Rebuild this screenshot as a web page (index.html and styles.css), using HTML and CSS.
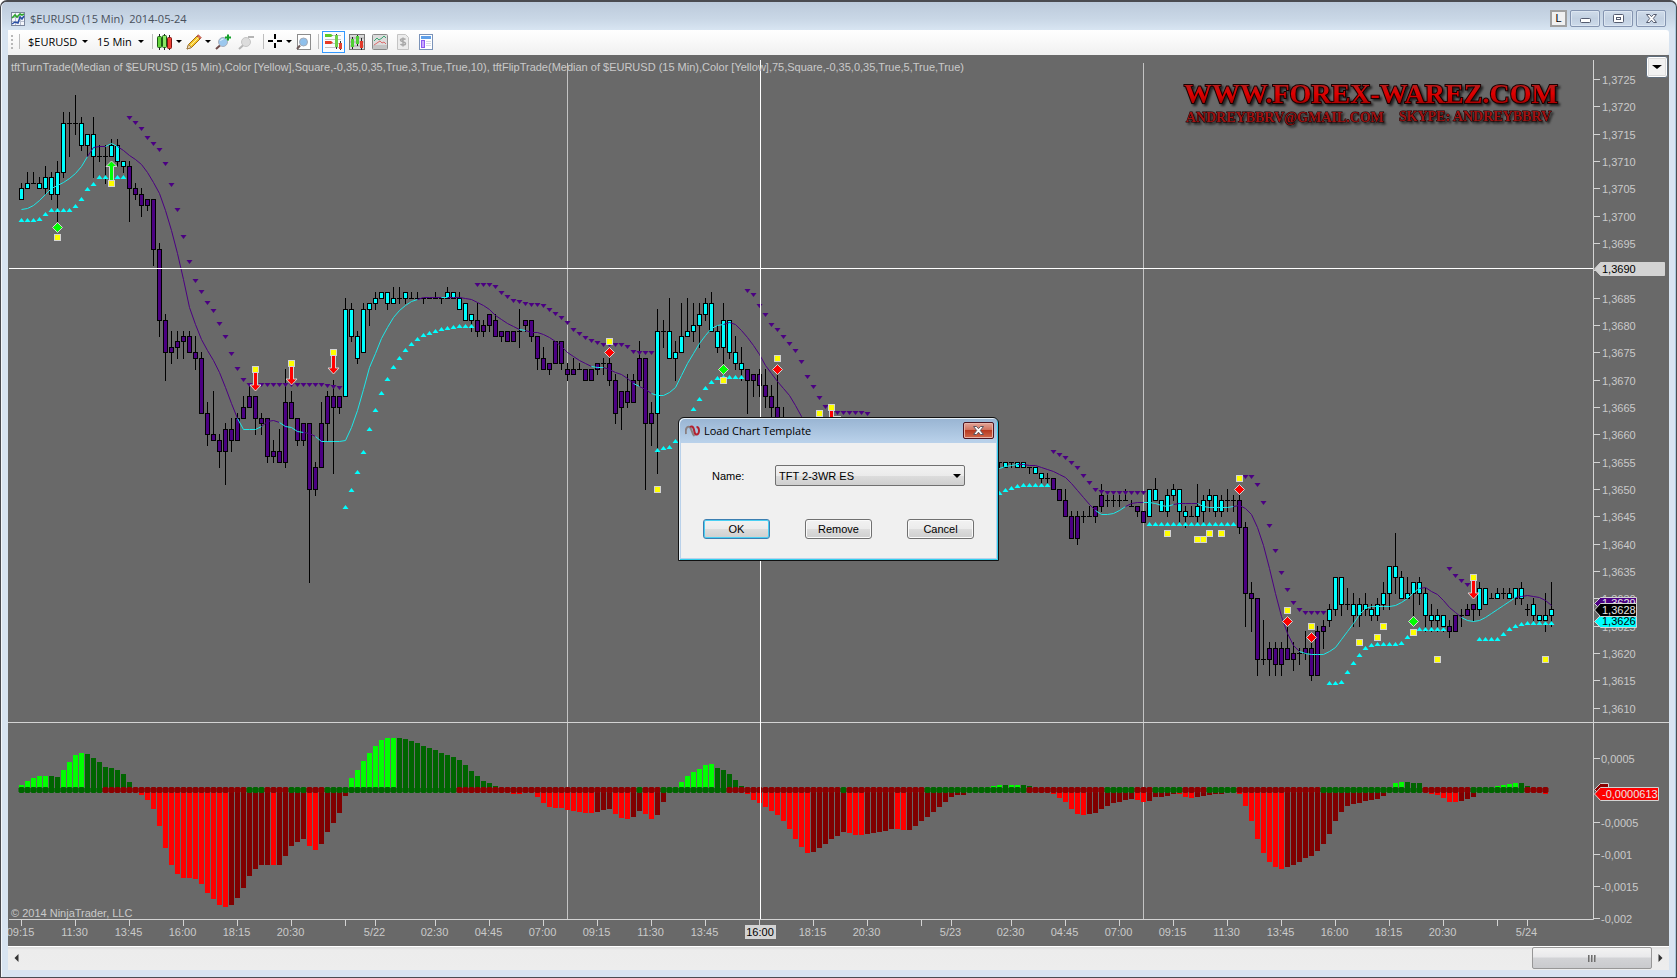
FILE: index.html
```html
<!DOCTYPE html>
<html lang="en">
<head>
<meta charset="utf-8">
<title>$EURUSD (15 Min) 2014-05-24</title>
<link rel="stylesheet" href="styles.css">
</head>
<body>
<div class="window">
  <header class="titlebar">
    <svg class="app-icon" viewBox="0 0 14 14" aria-hidden="true">
      <rect x=".5" y=".5" width="13" height="13" fill="#f4f6fb" stroke="#7b869c"/>
      <path d="M1 5.5h12M1 9.5h12M4.5 1v12M9.5 1v12" stroke="#b9c0d0"/>
      <path d="M1 6l3-3 2 2 3-3 2 1 2-1" fill="none" stroke="#2da52d" stroke-width="1.6"/>
      <path d="M1 12l3-2 3 1 2-6 2 2 2-3" fill="none" stroke="#2a4fa5" stroke-width="1.5"/>
    </svg>
    <h1 class="title">$EURUSD (15 Min)&nbsp; 2014-05-24</h1>
    <div class="window-buttons">
      <button class="link-button" type="button">L</button>
      <button class="win-button" type="button" aria-label="Minimize"><svg width="13" height="11" viewBox="0 0 13 11"><rect x="1.500" y="5.500" width="10" height="4" rx="1" fill="#fff" stroke="#555c70"/></svg></button>
      <button class="win-button" type="button" aria-label="Maximize"><svg width="13" height="11" viewBox="0 0 13 11"><rect x="1.500" y="1.500" width="10" height="8" rx="1" fill="#fff" stroke="#555c70"/><rect x="4.500" y="4.500" width="4" height="2" fill="#fff" stroke="#555c70"/></svg></button>
      <button class="win-button" type="button" aria-label="Close"><svg width="13" height="11" viewBox="0 0 13 11"><path d="M1.500 1.500h3l2 2.200 2-2.200h3L8.300 5.500l3.200 4h-3l-2-2.300-2 2.300h-3l3.200-4z" fill="#fff" stroke="#555c70"/></svg></button>
    </div>
  </header>
  <nav class="toolbar" aria-label="Chart tools">
    <span class="grip"></span>
    <span class="divider"></span>
    <button class="tool tool-symbol" type="button">$EURUSD<span class="caret"></span></button>
    <button class="tool tool-period" type="button">15 Min<span class="caret"></span></button>
    <span class="divider"></span>
    <button class="tool" type="button" aria-label="Chart style">
      <svg width="16" height="16" viewBox="0 0 16 16"><path d="M2.500 0v16M7.500 0v16M12.500 1v15" stroke="#222"/><rect x=".5" y="2.500" width="4" height="11" rx="1" fill="#63d33a" stroke="#1c5c14"/><rect x="5.500" y="1.500" width="4" height="12" rx="1" fill="#8be864" stroke="#1c5c14"/><rect x="10.500" y="3.500" width="4" height="11" rx="1" fill="#ef4136" stroke="#7e1512"/></svg><span class="caret"></span>
    </button>
    <button class="tool" type="button" aria-label="Drawing tools">
      <svg width="16" height="16" viewBox="0 0 16 16"><path d="M1 15l1.500-4.500L11 2l3 3-8.500 8.500z" fill="#f5c92c" stroke="#a36a14"/><path d="M2.500 10.500l3 3L1 15z" fill="#f3dcb6" stroke="#8b6a3a" stroke-width=".7"/><path d="M11 2l1.300-1.300 3 3L14 5z" fill="#e06a55" stroke="#a3483a" stroke-width=".7"/><path d="M4.500 11.500l8-8" stroke="#fff0a0"/></svg><span class="caret"></span>
    </button>
    <button class="tool tool-zoom" type="button" aria-label="Zoom in">
      <svg width="18" height="16" viewBox="0 0 18 16"><path d="M1 15l4.500-4" stroke="#6e4a4a" stroke-width="2"/><circle cx="8" cy="8" r="4.500" fill="#9cc8ee" stroke="#a9b0bd"/><path d="M5.500 7a3 3 0 0 1 3-2" stroke="#eef7ff" fill="none"/><path d="M13 .5v6M10 3.500h6" stroke="#12a02a" stroke-width="2"/></svg>
    </button>
    <button class="tool tool-zoom" type="button" aria-label="Zoom out" disabled>
      <svg width="18" height="16" viewBox="0 0 18 16"><path d="M1 15l4.500-4" stroke="#b5b5b5" stroke-width="2"/><circle cx="8" cy="8" r="4.500" fill="#dcdcdc" stroke="#c6c6c6"/><path d="M10 3h6" stroke="#b5b5b5" stroke-width="2"/></svg>
    </button>
    <span class="divider"></span>
    <button class="tool" type="button" aria-label="Crosshair">
      <svg width="15" height="15" viewBox="0 0 15 15"><path d="M7 0v5M7 9v5M0 7h5M9 7h5" stroke="#000" stroke-width="2"/></svg><span class="caret"></span>
    </button>
    <button class="tool" type="button" aria-label="Data box">
      <svg width="16" height="16" viewBox="0 0 16 16"><rect x="1.500" y=".5" width="13" height="15" fill="#fff" stroke="#8c8c8c"/><path d="M1 15l3-3.500" stroke="#6e5a5a" stroke-width="2"/><circle cx="7.500" cy="8" r="4" fill="#8fc0ec" stroke="#a3abb8"/></svg>
    </button>
    <span class="divider"></span>
    <button class="tool tool-active" type="button" aria-label="Chart trader" aria-pressed="true">
      <svg width="17" height="17" viewBox="0 0 17 17"><path d="M0 2.500h16M0 6.500h16M0 10.500h16M0 14.500h16" stroke="#c4c4c4"/><path d="M0 1h6l2 1.500L6 4H0z" fill="#5cc926"/><path d="M0 8h6l2 1.500L6 11H0z" fill="#e63a26"/><path d="M11.500 1v15M15.500 8v9" stroke="#333"/><rect x="10" y="2" width="3" height="12" fill="#6ed14a"/><rect x="14" y="10" width="3" height="6" fill="#e2402f"/></svg>
    </button>
    <button class="tool tool-panel" type="button" aria-label="Chart bars">
      <svg width="16" height="16" viewBox="0 0 16 16"><rect x=".5" y=".5" width="15" height="15" fill="#d8d8d8" stroke="#777"/><path d="M1 4h14M1 8h14M1 12h14" stroke="#aaa"/><path d="M3.500 3v12M8.500 1v11M12.500 4v12" stroke="#222"/><rect x="2" y="5" width="3" height="8" fill="#50cf35"/><rect x="7" y="2" width="3" height="8" fill="#50cf35"/><rect x="11" y="7" width="3" height="7" fill="#e3392a"/></svg>
    </button>
    <button class="tool tool-panel" type="button" aria-label="Indicators">
      <svg width="16" height="16" viewBox="0 0 16 16"><rect x=".5" y=".5" width="15" height="15" rx="1" fill="#dcdcdc" stroke="#8a8a8a"/><rect x="1" y="11" width="14" height="4" fill="#c3c3c3"/><path d="M2 7l3-3 2 2 3-2 2-2 2 2" fill="none" stroke="#3ba673"/><path d="M2 11l3-2 3-2 2 2 2-1 2 2" fill="none" stroke="#dd6b6b"/></svg>
    </button>
    <button class="tool tool-panel" type="button" aria-label="Strategies" disabled>
      <svg width="16" height="16" viewBox="0 0 16 16"><path d="M2.500.5h8l3 3v12h-11z" fill="#ececec" stroke="#c4c4c4"/><path d="M10.500 5.500c-1-1.200-5-1.300-5 .6 0 2.200 5 1.200 5 3.500 0 2-4 1.900-5 .4M8 3.500v9" fill="none" stroke="#a8a8a8" stroke-width="1.500"/></svg>
    </button>
    <button class="tool tool-panel" type="button" aria-label="Properties">
      <svg width="16" height="16" viewBox="0 0 16 16"><rect x="1.500" y=".5" width="13" height="15" fill="#fff" stroke="#7b93b8"/><rect x="3" y="2" width="10" height="3" fill="#5f9fe8"/><rect x="3.500" y="6.500" width="3" height="7" fill="#c9a8ff" stroke="#8b5cf0"/><path d="M8 7.500h5M8 9.500h5M8 11.500h5" stroke="#d6dbe4"/></svg>
    </button>
  </nav>
  <main class="chart">
    <svg class="plot" id="plot" viewBox="8 55 1661 891" role="img" aria-label="$EURUSD 15 minute chart"></svg>
    <button class="panel-toggle" type="button" aria-label="Panel menu"><span class="caret caret-large"></span></button>
  </main>
  <div class="scrollbar">
    <button class="scroll-arrow" type="button" aria-label="Scroll left"><svg width="5" height="8" viewBox="0 0 5 8"><path d="M4.500 0v8L.5 4z" fill="#333"/></svg></button>
    <div class="scroll-track"><div class="scroll-thumb"><i></i><i></i><i></i></div></div>
    <button class="scroll-arrow" type="button" aria-label="Scroll right"><svg width="5" height="8" viewBox="0 0 5 8"><path d="M.5 0v8l4-4z" fill="#333"/></svg></button>
  </div>
</div>
<div class="dialog-layer">
  <section class="dialog" role="dialog" aria-labelledby="dialog-title">
    <header class="dialog-header">
      <svg width="15" height="12" viewBox="0 0 15 12" aria-hidden="true"><path d="M1 9C0 4 2 1 4.500 2s2 7 5 9" fill="none" stroke="#8a7f80" stroke-width="2"/><path d="M5 2c3-2 4 2 4.500 5s4 4 4.500-1c0-2-1-4-2.500-4" fill="none" stroke="#b3202e" stroke-width="2"/></svg>
      <h2 class="dialog-title" id="dialog-title">Load Chart Template</h2>
      <button class="dialog-close" type="button" aria-label="Close"><svg width="13" height="11" viewBox="0 0 13 11"><path d="M1.500 1.500h3l2 2.200 2-2.200h3L8.300 5.500l3.200 4h-3l-2-2.300-2 2.300h-3l3.200-4z" fill="#fff" stroke="#5c5560"/></svg></button>
    </header>
    <form class="dialog-body">
      <div class="field">
        <label class="field-label" for="template">Name:</label>
        <span class="select-wrap"><select class="select" id="template"><option>TFT 2-3WR ES</option></select><span class="caret caret-select"></span></span>
      </div>
      <div class="actions">
        <button class="button button-default" type="button">OK</button>
        <button class="button" type="button">Remove</button>
        <button class="button" type="button">Cancel</button>
      </div>
    </form>
  </section>
</div>
<script src="chart.js"></script>
</body>
</html>
```
FILE: styles.css
```css
* { box-sizing: border-box; }
html, body { height: 100%; }
body {
  margin: 0;
  background: #fff;
  font: 11px/14px "Liberation Sans", Arial, sans-serif;
  color: #000;
}
button { font: inherit; color: inherit; margin: 0; padding: 0; }
svg { display: block; }

.window {
  height: 100vh;
  display: flex;
  flex-direction: column;
  padding: 0 7px 7px;
  border: 1px solid #4a4b50;
  border-top-width: 2px;
  border-radius: 7px 7px 0 0;
  background: #d8e4f1;
  box-shadow: inset 1px 0 0 #f3f7fb, inset -1px 0 0 #a9c9dd;
}
.titlebar {
  height: 28px;
  flex: none;
  margin: 0 -6px;
  padding: 5px 9px 0;
  display: flex;
  align-items: center;
  gap: 5px;
  border-radius: 5px 5px 0 0;
  background: linear-gradient(#bccadb, #c9d7e6 60%, #d8e5f2);
}
.app-icon { width: 14px; height: 14px; }
.title {
  flex: 1;
  margin: 0;
  font: 11px/16px "Open Sans", "Noto Sans", sans-serif;
  color: #48505c;
}
.window-buttons { display: flex; align-items: center; gap: 3px; }
.link-button {
  width: 17px;
  height: 17px;
  border: 2px solid #a0a0a0;
  background: #f0f0f0;
  line-height: 13px;
}
.win-button {
  width: 30px;
  height: 17px;
  display: grid;
  place-items: center;
  border: 1px solid #8494b0;
  border-radius: 2px;
  background: linear-gradient(#d0dcea, #c2d0e1 50%, #cddaea);
  box-shadow: inset 0 0 0 1px #dce6f1;
}

.toolbar {
  height: 25px;
  flex: none;
  display: flex;
  align-items: center;
  gap: 4px;
  padding: 0 3px 2px;
  border-radius: 0 3px 3px 0;
  background: linear-gradient(#fff, #f8f8f8 50%, #f0f0f0);
  font: 11px/16px "Open Sans", "Noto Sans", sans-serif;
}
.grip {
  width: 2px;
  height: 14px;
  background: repeating-linear-gradient(#b8b8b8 0 2px, transparent 2px 4px);
}
.divider { width: 1px; height: 15px; margin-left: 2px; background: #bdbdbd; }
.tool {
  display: flex;
  align-items: center;
  gap: 3px;
  border: 0;
  background: none;
  white-space: nowrap;
}
.tool-symbol { width: 65px; justify-content: space-between; padding: 0 1px 0 4px; }
.tool-period { width: 53px; justify-content: space-between; padding: 0 2px 0 4px; }
.tool-zoom { width: 19px; }
.tool-active {
  width: 23px;
  height: 22px;
  margin-left: -1px;
  justify-content: center;
  border: 1px solid #3399ff;
  background: #fafcff;
}
.tool-panel { width: 19px; }
.caret {
  width: 0;
  height: 0;
  border: 3px solid transparent;
  border-top-color: #000;
  border-bottom: 0;
}
.caret-large { border-width: 4px 5px 0; }
.caret-select { border-width: 4px 4px 0; }

.chart {
  position: relative;
  flex: 1;
  min-height: 0;
  overflow: hidden;
  background: #696969;
}
.plot { width: 100%; height: 100%; }
.plot text { font: 11px "Liberation Sans", Arial, sans-serif; fill: #cacaca; }
.plot .centered { text-anchor: middle; }
.plot .dark { fill: #000; }
.plot .light { fill: #e6e6e6; }
.plot .brand {
  font: bold 28px "Liberation Serif", "Times New Roman", serif;
  fill: url(#brand-fill);
  stroke: #1c0000;
  stroke-width: 2px;
  paint-order: stroke;
  filter: drop-shadow(2px 2px 1px #222);
}
.plot .brand-small { font-size: 14px; stroke-width: 1px; fill: #a01212; }
.axis { stroke: #d3d3d3; fill: none; }
.session { stroke: #c3c3c3; }
.cursor { stroke: #fff; }
.wick { stroke: #000; }
.body-up { fill: #00ffff; stroke: #000; }
.body-down { fill: #4b0082; stroke: #000; }
.average { fill: none; }
.average-up { stroke: #1ce8e8; }
.average-down { stroke: #4b0082; }
.trail-up { fill: #00ffff; }
.trail-down { fill: #4b0082; }
.square { fill: #ffff00; stroke: #d3d3d3; }
.signal { stroke: #d3d3d3; }
.panel-toggle {
  position: absolute;
  top: 1px;
  right: 1px;
  width: 22px;
  height: 22px;
  display: grid;
  place-items: center;
  border: 1px solid #5f6d7c;
  border-radius: 3px;
  background: #f2f2f2;
  box-shadow: inset 0 0 0 1px #fff, inset 0 0 0 2px #dcdcdc;
}

.scrollbar {
  height: 24px;
  flex: none;
  display: flex;
  padding-bottom: 1px;
  border-top: 1px solid #fff;
  background: linear-gradient(#dedede, #ececec 3px, #ededed);
}
.scroll-arrow {
  width: 17px;
  display: grid;
  place-items: center;
  border: 0;
  background: none;
}
.scroll-track { flex: 1; display: flex; justify-content: flex-end; }
.scroll-thumb {
  width: 120px;
  display: flex;
  align-items: center;
  justify-content: center;
  gap: 1px;
  border: 1px solid #979797;
  border-radius: 2px;
  background: linear-gradient(#f3f3f3, #e9e9eb 45%, #d2d3d6 50%, #c9cacd);
}
.scroll-thumb i { width: 2px; height: 7px; background: linear-gradient(90deg, #555, #bbb); }

.dialog-layer {
  position: absolute;
  inset: 0;
  display: grid;
  place-items: center;
}
.dialog {
  width: 321px;
  padding: 0 2px 2px;
  border: 1px solid #111;
  border-radius: 6px 6px 0 0;
  background: linear-gradient(#98b4d2, #b9d1ea 24px, #b9d1ea);
  box-shadow: inset 1px 1px 0 #e6f0f8, inset -1px -1px 0 #33cfee;
}
.dialog-header {
  height: 25px;
  display: flex;
  align-items: center;
  gap: 4px;
  padding: 0 2px 0 4px;
}
.dialog-title {
  flex: 1;
  margin: 0;
  font: 11px/16px "Open Sans", "Noto Sans", sans-serif;
}
.dialog-close {
  width: 31px;
  height: 17px;
  display: grid;
  place-items: center;
  border: 1px solid #4d1420;
  border-radius: 2px;
  background: linear-gradient(#e3a599, #d0705c 48%, #b83a20 50%, #d0694c);
  box-shadow: inset 0 0 0 1px #e8b3a8;
}
.dialog-body {
  display: flex;
  flex-direction: column;
  gap: 33px;
  padding: 22px 22px 19px;
  background: #f0f0f0;
}
.field { display: flex; align-items: center; justify-content: space-between; padding: 0 9px; }
.select-wrap { position: relative; width: 190px; height: 21px; }
.select {
  width: 100%;
  height: 100%;
  appearance: none;
  padding: 0 3px;
  border: 1px solid #707070;
  border-radius: 2px;
  background: linear-gradient(#f2f2f2, #ebebeb 50%, #dddddd 51%, #cfcfcf);
  font: inherit;
  color: #000;
}
.caret-select { position: absolute; right: 4px; top: 9px; pointer-events: none; }
.actions { display: flex; justify-content: space-between; }
.button {
  width: 67px;
  height: 20px;
  border: 1px solid #707070;
  border-radius: 3px;
  background: linear-gradient(#f2f2f2, #ebebeb 50%, #dddddd 51%, #cfcfcf);
  box-shadow: inset 0 0 0 1px #fafafa;
}
.button-default { border-color: #3c7fb1; box-shadow: inset 0 0 0 1px #4bd0f3; }
```
FILE: chart.js
```js
const STEP = 6;
const FIRST = 21.5;
const barX = (i) => FIRST + i * STEP;
const priceY = (p) => 79.5 + (125 - p) * 5.468;
const snap = (v) => Math.floor(v) + 0.5;

// High, body top, body bottom, low; pips above 1,3600. Keys are the first bar of each run.
const candles = {
  0: `106 105 103 103|108 106 105 105|108 106 106 106|107 106 105 105|109 107 105 104|108 107 104 103|110 108 104 99|119 117 108 107|119 117 117 111|122 117 117 115|118 117 113 112|115 115 113 111|118 115 111 107|113 111 111 110|113 111 111 106|114 113 111 111|114 113 110 109|110 110 109 108|110 109 105 99|106 105 104 103|105 104 102 100|103 103 102 101|103 103 94 91|95 94 81 78|82 81 75 70|79 76 75 73|79 77 76 74|79 78 77 74|79 78 75 75|78 75 74 72|75 74 64 64|66 64 60 58|68 60 59 59|60 59 57 54|62 61 57 51|63 61 59 57|64 63 59 59|67 65 63 63|69 67 65 65|67 67 63 60|64 63 62 60|63 63 56 55|59 57 56 55|61 57 55 55|72 66 55 54|68 66 63 63|63 63 59 58|62 62 59 58|62 62 50 33|55 54 50 49|66 62 54 54|68 67 62 59|70 67 65 53|67 67 65 64|85 83 67 67|84 83 78 77|79 78 74 73|84 83 75 75|84 84 83 80|86 85 84 83|86 86 85 85|86 86 84 83|87 85 84 84|87 85 85 84|86 86 85 84|86 85 85 85|86 85 85 85|85 85 85 84|85 85 85 85|86 85 85 85|85 85 85 84|87 86 85 85|86 86 85 85|86 85 83 83|84 84 81 81|82 82 81 79|84 81 79 78|81 80 79 78|82 82 80 79|82 81 78 78|79 79 78 77|79 79 77 77|79 79 77 77|83 79 79 76|81 81 80 79|81 81 78 77|78 78 74 72|76 74 72 72|73 73 72 71|77 77 73 73|77 77 73 72|73 72 71 70|74 72 71 71|73 72 72 72|72 72 70 70|72 72 70 70|73 73 72 71|74 73 73 71|74 73 70 69|71 70 64 62|68 68 65 61|71 68 66 65|71 70 66 66|77 74 70 69|74 74 62 50|66 64 62 58|83 79 64 53|81 79 79 76|85 79 74 74|77 75 74 70|84 78 75 75|85 79 78 78|84 80 79 77|84 82 80 76|85 84 82 81|86 84 79 79|80 79 76 75|84 81 76 73|81 81 75 74|78 75 73 72|76 73 72 70|72 72 70 64|71 71 70 67|72 71 69 67|72 69 67 65|69 67 65 62|71 65 61 60|65 61 60 60`,
  163: `55 55 55 54|55 55 54 54|55 55 55 54|55 55 54 54|55 55 54 54|54 54 54 53|54 54 53 53|53 53 52 51|53 52 52 51|52 52 50 50|50 50 48 48|50 48 45 45|46 45 41 41|46 45 41 40|46 45 45 44|47 45 45 45|47 47 45 44|51 49 47 46|49 48 48 47|49 48 48 47|49 48 48 47|50 48 48 48|48 47 47 47|47 47 46 45|46 46 44 44|50 50 45 45|52 50 48 48|48 48 46 46|50 49 46 45|51 50 49 48|50 50 46 44|47 46 45 43|47 45 45 45|51 47 45 44|49 48 46 44|50 49 48 46|49 49 46 45|49 48 46 45|50 48 48 46|49 48 48 46|49 48 43 42|44 43 31 25|33 31 30 24|30 30 19 16|26 19 19 18|22 21 19 16|22 21 18 16|22 21 18 16|25 21 19 19|22 20 19 17|21 20 20 18|24 21 20 19|22 21 16 15|25 24 16 16|26 25 24 21|29 28 26 25|34 34 28 27|34 34 29 27|32 29 29 28|31 29 27 25|30 29 27 25|31 29 28 27|29 28 27 26|30 29 27 26|33 31 29 28|36 36 31 28|42 36 34 31|35 34 30 30|34 31 30 30|33 33 31 27|34 33 31 29|32 31 27 24|29 27 26 24|28 27 26 24|27 27 25 24|26 25 24 23|27 27 24 24|28 27 27 25|29 28 27 27|29 29 28 26|33 32 28 27|32 32 29 29|31 30 30 30|32 31 30 30|32 31 31 30|32 31 30 30|32 32 30 29|33 32 30 29|29 28 28 27|30 29 27 26|27 27 26 26|31 27 26 24|33 28 27 25`
};
const upRuns = [[0, 17], [54, 75], [106, 120], [163, 171], [188, 202], [218, 237], [243, 255]];

const average = {
  0: [209, 208, 205, 200, 194, 188, 185, 182, 178, 173, 166, 156, 147, 146, 146, 143, 146, 150, 155, 159, 164, 172, 182, 193, 210, 230, 253, 279, 307, 324, 339, 350, 360, 372, 387, 403, 418, 429, 429, 429, 426, 421, 420, 422, 426, 427, 431, 432, 433, 436, 441, 441, 441, 441, 440, 427, 410, 389, 367, 353, 338, 327, 317, 310, 305, 301, 299, 297, 297, 297, 297, 297, 297, 297, 298, 299, 302, 305, 309, 315, 319, 323, 326, 329, 330, 332, 332, 334, 337, 341, 346, 352, 356, 360, 363, 366, 367, 367, 369, 372, 374, 378, 383, 386, 389, 393, 395, 395, 392, 387, 375, 363, 353, 343, 335, 328, 325, 324, 322, 324, 330, 337, 345, 354, 365, 373, 381, 388, 395, 405, 416, 430],
  162: [470, 468, 466, 465, 464, 464, 465, 465, 467, 469, 471, 474, 477, 483, 490, 497, 504, 510, 514, 514, 513, 510, 506, 503, 502, 502, 502, 503, 505, 506, 504, 503, 503, 503, 503, 506, 507, 507, 507, 507, 506, 505, 508, 514, 527, 545, 568, 593, 616, 633, 645, 651, 653, 654, 654, 654, 651, 647, 639, 631, 623, 614, 608, 606, 606, 606, 606, 605, 602, 598, 592, 588, 587, 591, 594, 600, 607, 612, 617, 620, 621, 620, 617, 613, 609, 605, 601, 597, 596, 595, 596, 597, 600, 605]
};
const averageDown = [[11, 14], [16, 36], [40, 43], [47, 49], [66, 70], [71, 83], [84, 95], [97, 102], [103, 105], [117, 131], [166, 179], [184, 187], [192, 196], [202, 213], [233, 240], [249, 255]];

const rep = (v, n) => Array(n).fill(v);
const trailDown = {
  18: [118, 123, 129, 138, 144, 150, 164, 185, 210, 237, 262, 281, 292, 303, 311, 324, 337, 354, 369, 380, ...rep(385, 13), 386, 387, 388],
  76: [285, 285, 285, 287, 293, 297, 301, 302, 304, 305, 305, 306, 310, 314, 318, 323, 330, 334, 338, 341, 343, 345, 345, 345, 345, 347, 352, 353, 353, 353],
  121: [291, 295, 306, 315, 325, 330, 337, 344, 351, 362, 377, 387, 398, 407, 413, 413, 413, 413, 413, 413, 414],
  172: [452, 455, 458, 463, 468, 476, 483, 490, 492, ...rep(493, 7)],
  204: [477, 477, 485, 503, 526, 551, 573, 590, 603, 610, 613, 613, 613, 613],
  238: [569, 576, 581, 585]
};
const trailUp = {
  0: [220, 220, 220, 219, 214, 210, 210, 210, 210, 206, 199, 189, 184, 177, 177, 177, 177, 177],
  54: [507, 490, 472, 452, 429, 410, 393, 379, 367, 358, 350, 344, 339, 335, 333, 331, 329, 328, 327, 326, 326, 326],
  106: [450, 448, 447, 441, 432, 420, 409, 399, 388, 382, 378, 377, 377, 377, 377],
  163: [493, 490, 488, 486, ...rep(485, 5)],
  188: rep(524, 15),
  218: [683, 683, 682, 672, 663, 655, 648, 645, 644, 644, 644, 644, 643, 637, 632, ...rep(629, 5)],
  243: [639, 639, 639, 639, 634, 629, 626, 624, ...rep(623, 5)]
};

const histogram = [5, 9, 12, 14, 14, 14, 13, 20, 28, 35, 37, 36, 32, 28, 23, 22, 20, 16, 8, 0, -5, -10, -19, -36, -58, -75, -84, -88, -88, -89, -94, -103, -109, -115, -117, -115, -108, -98, -86, -79, -75, -75, -75, -75, -66, -56, -52, -49, -56, -60, -54, -42, -33, -23, -6, 12, 20, 29, 37, 44, 50, 52, 52, 52, 51, 49, 47, 44, 42, 40, 37, 35, 33, 30, 25, 19, 14, 9, 7, 4, 0, 0, -4, -4, 0, 0, -7, -13, -17, -18, -18, -20, -21, -22, -23, -23, -22, -20, -19, -24, -28, -29, -27, -21, -24, -29, -25, -12, 0, 3, 8, 14, 18, 21, 25, 26, 22, 20, 16, 10, 4, -4, -10, -13, -17, -21, -25, -31, -39, -49, -57, -63, -62, -58, -54, -49, -46, -42, -43, -45, -45, -44, -43, -42, -41, -39, -39, -40, -40, -36, -31, -27, -22, -17, -12, -7, -5, -5, 0, 0, 0, 3, 4, 5, 5, 5, 5, 5, 4, 0, 0, 0, -4, -8, -12, -19, -24, -25, -24, -23, -19, -16, -13, -12, -10, -9, -10, -12, -11, -7, -7, -6, -4, -4, -7, -8, -7, -6, -5, -4, -4, 0, 0, -4, -16, -31, -49, -63, -72, -77, -79, -77, -75, -72, -68, -66, -61, -54, -44, -31, -22, -16, -14, -13, -11, -10, -9, -6, 0, 7, 8, 8, 7, 7, 0, -4, -5, -8, -12, -12, -11, -9, -7, 0, 0, 0, 4, 5, 6, 7, 7, 4, 0, 0, -4];
const strongRuns = [[0, 4], [7, 10], [20, 34], [42, 42], [48, 49], [55, 62], [82, 95], [99, 101], [104, 105], [109, 115], [121, 131], [138, 140], [146, 147], [161, 163], [165, 166], [172, 177], [186, 187], [193, 195], [203, 210], [229, 230], [235, 239], [246, 249], [254, 254]];
const greenDots = [[0, 13], [38, 40], [45, 47], [51, 72], [103, 103], [107, 117], [137, 137], [151, 167], [181, 185], [189, 193], [198, 202], [217, 233], [242, 250]];

const squares = [[6, 237], [15, 183], [39, 369], [45, 363], [52, 352], [98, 341], [106, 489], [117, 380], [126, 358], [133, 413], [135, 407], [136, 419], [191, 533], [196, 539], [197, 539], [198, 533], [200, 533], [203, 478], [211, 610], [215, 626], [223, 642], [226, 637], [227, 626], [232, 632], [236, 659], [242, 577], [254, 659]];
const diamonds = [[6, 227, "#0f0"], [98, 352, "#f00"], [117, 369, "#0f0"], [126, 369, "#f00"], [203, 489, "#f00"], [211, 621, "#f00"], [215, 637, "#f00"], [232, 621, "#0f0"]];
const arrows = [[39, 372, 391], [45, 366, 385], [52, 355, 374], [135, 410, 429], [242, 580, 599]];

const times = [[0, "09:15"], [9, "11:30"], [18, "13:45"], [27, "16:00"], [36, "18:15"], [45, "20:30"], [54, ""], [59, "5/22"], [69, "02:30"], [78, "04:45"], [87, "07:00"], [96, "09:15"], [105, "11:30"], [114, "13:45"], [123, ""], [132, "18:15"], [141, "20:30"], [150, ""], [155, "5/23"], [165, "02:30"], [174, "04:45"], [183, "07:00"], [192, "09:15"], [201, "11:30"], [210, "13:45"], [219, "16:00"], [228, "18:15"], [237, "20:30"], [246, ""], [251, "5/24"]];

const inRuns = (runs, i) => runs.some(([a, b]) => i >= a && i <= b);
const out = [];
const line = (x1, y1, x2, y2, cls) => out.push(`<line x1="${x1}" y1="${y1}" x2="${x2}" y2="${y2}" class="${cls}"/>`);
const text = (x, y, s, cls = "") => { if (s) out.push(`<text x="${x}" y="${y}" class="${cls}">${s}</text>`); };

out.push(`<defs><linearGradient id="brand-fill" x1="0" y1="0" x2="0" y2="1"><stop offset="0" stop-color="#8c3030"/><stop offset=".5" stop-color="#e00000"/><stop offset="1" stop-color="#900000"/></linearGradient></defs>`);

// Frame, scales and session breaks
line(barX(91), 63, barX(91), 919, "session");
line(barX(187), 63, barX(187), 919, "session");
line(8, 722.5, 1669, 722.5, "axis");
out.push(`<path class="axis" d="M1593.500 60V919.500H9"/>`);
for (let p = 125; p >= 10; p -= 5) {
  const y = snap(priceY(p));
  line(1594, y, 1600, y, "axis");
  if (p !== 90) text(1602, y + 4.5, "1,3" + (600 + p));
}
[[758.5, "0,0005"], [822.5, "-0,0005"], [854.5, "-0,001"], [886.5, "-0,0015"], [918.5, "-0,002"]].forEach(([y, s]) => {
  line(1594, y, 1600, y, "axis");
  text(1601, y + 4.5, s);
});
times.forEach(([i, s]) => {
  line(barX(i), 920, barX(i), 926, "axis");
  text(barX(i) - 1, 936, s, "centered");
});

// Candles
for (const [start, rows] of Object.entries(candles)) {
  rows.split("|").forEach((row, k) => {
    const i = Number(start) + k;
    const [h, t, b, l] = row.split(" ").map((v) => snap(priceY(Number(v))));
    const x = barX(i);
    if (h !== l) line(x, h - 0.5, x, l + 0.5, "wick");
    if (t === b) line(x - 2.5, t, x + 2.5, t, "wick");
    else out.push(`<rect x="${x - 2}" y="${t}" width="4" height="${b - t}" class="${inRuns(upRuns, i) ? "body-up" : "body-down"}"/>`);
  });
}

// Moving average, split where its colour changes
for (const [start, ys] of Object.entries(average)) {
  let d = "", last = null;
  ys.slice(0, -1).forEach((y, k) => {
    const i = Number(start) + k;
    const down = averageDown.some(([a, b]) => i >= a && i < b);
    if (down !== last) {
      if (d) out.push(d + `"/>`);
      d = `<path class="average average-${down ? "down" : "up"}" d="M${barX(i)} ${y + 0.5}`;
      last = down;
    }
    d += `L${barX(i + 1)} ${ys[k + 1] + 0.5}`;
  });
  out.push(d + `"/>`);
}

for (const [start, ys] of Object.entries(trailDown)) {
  ys.forEach((y, k) => { const x = barX(Number(start) + k); out.push(`<path class="trail-down" d="M${x - 3} ${y - 2}h6l-3 4z"/>`); });
}
for (const [start, ys] of Object.entries(trailUp)) {
  ys.forEach((y, k) => { const x = barX(Number(start) + k); out.push(`<path class="trail-up" d="M${x - 3} ${y + 2}h6l-3-4z"/>`); });
}

// Signals
arrows.forEach(([i, y, tip]) => {
  const x = barX(i);
  out.push(`<path class="signal" fill="#f00" d="M${x - 2} ${y}V${tip - 6}H${x - 5.5}L${x} ${tip}L${x + 5.5} ${tip - 6}H${x + 2}V${y}z"/>`);
});
out.push(`<path class="signal" fill="#0f0" d="M${barX(15) - 2} 181V166.500h-3.500L${barX(15)} 161l5.500 5.500h-3.500V181z"/>`);
squares.forEach(([i, y]) => out.push(`<rect class="square" x="${barX(i) - 3}" y="${y - 2.5}" width="6" height="6"/>`));
diamonds.forEach(([i, y, c]) => { const x = barX(i); out.push(`<path class="signal" fill="${c}" d="M${x} ${y - 4.5}l5 5-5 5-5-5z"/>`); });

// Histogram and its zero-line dots
histogram.forEach((v, i) => {
  const x = barX(i);
  const strong = inRuns(strongRuns, i);
  const fill = v > 0 ? (strong ? "#00ff00" : "#006400") : (strong ? "#ff0000" : "#800000");
  if (v) out.push(`<rect x="${x - 2.5}" y="${v > 0 ? 790 - v : 790}" width="5" height="${Math.abs(v)}" fill="${fill}"/>`);
});
histogram.forEach((v, i) => {
  const x = barX(i);
  const c = inRuns(greenDots, i) ? "#006400" : "#8b0000";
  out.push(`<rect x="${x - 2.5}" y="787" width="5" height="6" rx="1" fill="${c}"/><rect x="${x - 3}" y="788" width="6" height="4" fill="${c}"/>`);
});

// Crosshair
line(9, 268.5, 1593, 268.5, "cursor");
line(760.5, 60, 760.5, 919, "cursor");

// Price tags
const tag = (y, h, right, fill) => out.push(`<path d="M1594.500 ${y + h / 2}l6-${h / 2}H${right}v${h}H1600.500z" fill="${fill}" stroke="#d3d3d3"/>`);
tag(597.5, 12, 1636.5, "#4b0082");
text(1602, 607, "1,3629", "light");
tag(615.5, 12, 1636.5, "#00ffff");
text(1602, 625, "1,3626", "dark");
tag(603.5, 13, 1636.5, "#000");
text(1602, 614, "1,3628", "light");
tag(783.5, 12, 1608.5, "#8b0000");
tag(787.5, 13, 1658.5, "#ff0000");
text(1602, 798, "-0,0000613", "light");
tag(262.5, 13, 1664.5, "#d3d3d3");
text(1602, 273, "1,3690", "dark");
out.push(`<rect x="745" y="925" width="31" height="14" fill="#d3d3d3"/>`);
text(760, 936, "16:00", "dark centered");

text(11, 71, "tftTurnTrade(Median of $EURUSD (15 Min),Color [Yellow],Square,-0,35,0,35,True,3,True,True,10), tftFlipTrade(Median of $EURUSD (15 Min),Color [Yellow],75,Square,-0,35,0,35,True,5,True,True)");
text(11, 917, "© 2014 NinjaTrader, LLC");
text(1184, 103, "WWW.FOREX-WAREZ.COM", "brand");
text(1186, 122, "ANDREYBBRV@GMAIL.COM", "brand brand-small");
text(1399, 121, "SKYPE: ANDREYBBRV", "brand brand-small");

document.getElementById("plot").innerHTML = out.join("");
```
